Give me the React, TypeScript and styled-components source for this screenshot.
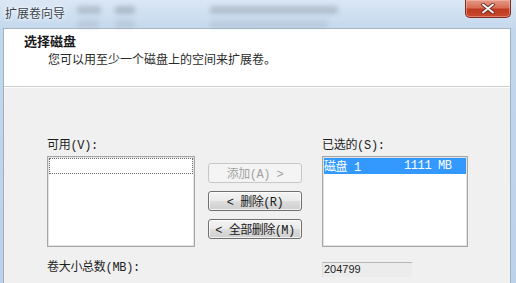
import React from "react";
import styled, { createGlobalStyle } from "styled-components";

const Global = createGlobalStyle`
  html, body { margin: 0; padding: 0; }
  body { width: 516px; height: 283px; overflow: hidden; background: #c4d7ec; }
`;

const cjk = `"Noto Sans CJK SC", "Microsoft YaHei", sans-serif`;
const simsun = `"Liberation Mono", "Noto Sans CJK SC", monospace`;

const Window = styled.div`
  width: 516px;
  height: 283px;
  display: flex;
  flex-direction: column;
  background: linear-gradient(180deg, #dbe7f4 0px, #cfe0f1 14px, #c3d7ec 30px, #bcd2ea 283px);
  overflow: hidden;
`;

const TitleBar = styled.div`
  height: 28px;
  flex: 0 0 28px;
  display: flex;
  align-items: flex-start;
  padding-left: 5px;
  box-sizing: border-box;
`;

const TitleText = styled.div`
  font-family: ${cjk};
  font-size: 12px;
  line-height: 14px;
  margin-top: 6px;
  color: #3a4450;
  text-shadow: 0 0 6px #ffffff, 0 0 3px #ffffff;
`;

const BlurGroup = styled.div<{ $ml: number }>`
  display: flex;
  flex-direction: column;
  gap: 6px;
  margin-left: ${(p) => p.$ml}px;
  margin-top: 6px;
`;

const Blur = styled.div<{ $w: number; $o: number }>`
  width: ${(p) => p.$w}px;
  height: 8px;
  background: #7f8b99;
  opacity: ${(p) => p.$o};
  filter: blur(2.5px);
  border-radius: 3px;
`;

const Spacer = styled.div`
  flex: 1;
`;

const CloseButton = styled.div`
  width: 46px;
  height: 18px;
  margin-right: 5px;
  box-sizing: border-box;
  border: 1px solid #7e2c20;
  border-top: none;
  border-radius: 0 0 5px 5px;
  background: linear-gradient(180deg, #e39a88 0%, #d66e55 45%, #bf3a22 55%, #c84a2e 100%);
  display: flex;
  align-items: center;
  justify-content: center;
  box-shadow: inset 0 0 0 1px rgba(255, 200, 190, 0.45);
`;

const Client = styled.div`
  flex: 1;
  margin: 0 5px 0 3px;
  display: flex;
  flex-direction: column;
  background: #f0f0f0;
  border-left: 1px solid #9fb0c2;
  border-right: 1px solid #9fb0c2;
  border-top: 1px solid #a8b6c4;
`;

const Header = styled.div`
  height: 58px;
  flex: 0 0 58px;
  box-sizing: border-box;
  background: #ffffff;
  padding: 4px 0 0 20px;
  border-bottom: 1px solid #c9cdd2;
  box-shadow: 0 1px 0 #ffffff;
`;

const HeaderTitle = styled.div`
  font-family: ${cjk};
  font-weight: bold;
  font-size: 13px;
  line-height: 16px;
  color: #1a1a1a;
`;

const HeaderSub = styled.div`
  font-family: ${cjk};
  font-size: 12px;
  line-height: 15px;
  color: #2a2a2a;
  margin: 2px 0 0 24px;
`;

const Body = styled.div`
  display: grid;
  grid-template-columns: 148px max-content 146px;
  grid-template-rows: 19px 91px auto;
  justify-content: start;
  padding: 50px 0 0 43px;
`;

const Label = styled.div<{ $col: number }>`
  grid-column: ${(p) => p.$col};
  align-self: end;
  margin-bottom: 2px;
  font-family: ${simsun};
  font-size: 12px;
  line-height: 15px;
  color: #1e1e1e;
  letter-spacing: -0.3px;
`;

const ListBox = styled.div<{ $col: number }>`
  grid-column: ${(p) => p.$col};
  box-sizing: border-box;
  background: #ffffff;
  border: 1px solid #a6a6a6;
  box-shadow: inset 0 0 0 1px #e2e2e2;
  padding: 1px;
  display: flex;
  flex-direction: column;
`;

const FocusRow = styled.div`
  height: 16px;
  box-sizing: border-box;
  border: 1px dotted #6a6a6a;
`;

const SelectedRow = styled.div`
  height: 16px;
  background: #3399ff;
  display: flex;
  align-items: center;
  font-family: ${simsun};
  font-size: 12px;
  color: #ffffff;
  white-space: pre;
  letter-spacing: -0.4px;
`;

const Cell = styled.span<{ $w: number }>`
  width: ${(p) => p.$w}px;
`;

const ButtonColumn = styled.div`
  grid-column: 2;
  display: flex;
  flex-direction: column;
  gap: 8px;
  padding-top: 7px;
  margin: 0 20px 0 13px;
`;

const Button = styled.div<{ $disabled?: boolean }>`
  height: 20px;
  width: 94px;
  box-sizing: border-box;
  border-radius: 3px;
  border: 1px solid ${(p) => (p.$disabled ? "#c7c7c7" : "#707070")};
  background: ${(p) =>
    p.$disabled
      ? "#f4f4f4"
      : "linear-gradient(180deg, #f3f3f3 0%, #ebebeb 48%, #dddddd 52%, #cfcfcf 100%)"};
  box-shadow: ${(p) => (p.$disabled ? "none" : "inset 0 0 0 1px rgba(255,255,255,0.7)")};
  display: flex;
  align-items: center;
  justify-content: center;
  font-family: ${simsun};
  font-size: 12px;
  letter-spacing: -0.5px;
  color: ${(p) => (p.$disabled ? "#a3a3a3" : "#1a1a1a")};
  white-space: pre;
`;

const TotalLabel = styled.div`
  grid-column: 1 / 3;
  margin-top: 14px;
  font-family: ${simsun};
  font-size: 12px;
  line-height: 15px;
  color: #1e1e1e;
  letter-spacing: -0.3px;
`;

const TotalValue = styled.div`
  grid-column: 3;
  margin-top: 15px;
  width: 90px;
  height: 15px;
  box-sizing: border-box;
  border-top: 1px solid #b5b5b5;
  border-left: 1px solid #dadada;
  background: #ececec;
  font-family: "Liberation Sans", "DejaVu Sans", sans-serif;
  font-size: 11px;
  line-height: 13px;
  padding-left: 1px;
  color: #1e1e1e;
`;

export default function App() {
  return (
    <>
      <Global />
      <Window>
        <TitleBar>
          <TitleText>扩展卷向导</TitleText>
          <BlurGroup $ml={12}>
            <Blur $w={24} $o={0.4} />
            <Blur $w={22} $o={0.2} />
          </BlurGroup>
          <BlurGroup $ml={14}>
            <Blur $w={20} $o={0.45} />
            <Blur $w={20} $o={0.2} />
          </BlurGroup>
          <BlurGroup $ml={75}>
            <Blur $w={128} $o={0.4} />
            <Blur $w={118} $o={0.18} />
          </BlurGroup>
          <Spacer />
          <CloseButton>
            <svg width="14" height="11" viewBox="0 0 14 11">
              <path
                d="M2 1.5 L12 9.5 M12 1.5 L2 9.5"
                stroke="#6a2a20"
                strokeWidth="3.6"
                strokeLinecap="round"
              />
              <path
                d="M2 1.5 L12 9.5 M12 1.5 L2 9.5"
                stroke="#f4f0ee"
                strokeWidth="2"
                strokeLinecap="round"
              />
            </svg>
          </CloseButton>
        </TitleBar>
        <Client>
          <Header>
            <HeaderTitle>选择磁盘</HeaderTitle>
            <HeaderSub>您可以用至少一个磁盘上的空间来扩展卷。</HeaderSub>
          </Header>
          <Body>
            <Label $col={1}>可用(V):</Label>
            <Label $col={3}>已选的(S):</Label>
            <ListBox $col={1}>
              <FocusRow />
            </ListBox>
            <ButtonColumn>
              <Button $disabled>添加(A) &gt;</Button>
              <Button>&lt; 删除(R)</Button>
              <Button>&lt; 全部删除(M)</Button>
            </ButtonColumn>
            <ListBox $col={3}>
              <SelectedRow>
                <Cell $w={80}>磁盘 1</Cell>
                <span>1111 MB</span>
              </SelectedRow>
            </ListBox>
            <TotalLabel>卷大小总数(MB):</TotalLabel>
            <TotalValue>204799</TotalValue>
          </Body>
        </Client>
      </Window>
    </>
  );
}
